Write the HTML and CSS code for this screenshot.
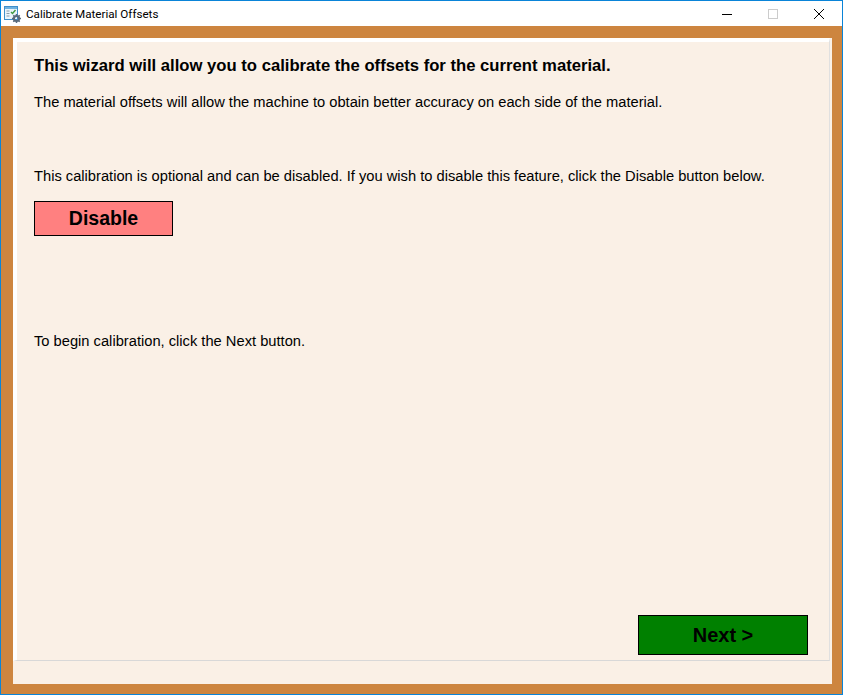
FILE: index.html
```html
<!DOCTYPE html>
<html lang="en">
<head>
    <meta charset="UTF-8">
    <title>Calibrate Material Offsets</title>
    <link rel="stylesheet" href="styles.css">
</head>
<body>
    <div class="window">
        <!-- Title bar -->
        <div class="titlebar">
            <svg class="app-icon" width="18" height="18" viewBox="0 0 18 18">
                <rect x="0.5" y="0.5" width="13" height="13" fill="#eaf4fb" stroke="#3f8fcb"/>
                <rect x="1" y="1" width="12" height="2" fill="#6fb2e0"/>
                <path d="M2.500 5h3M2.500 7.500h3M2.500 10h3" stroke="#8a9bab" stroke-width="1.200"/>
                <path d="M7 6l1.500 1.500 3-3.500" fill="none" stroke="#3f9a3f" stroke-width="1.400"/>
                <circle cx="12.500" cy="12.500" r="2.600" fill="none" stroke="#5a6b7c" stroke-width="2"/>
                <path d="M12.500 8v2M12.500 15v2M8 12.500h2M15 12.500h2M9.300 9.300l1.400 1.400M14.300 14.300l1.400 1.400M9.300 15.700l1.400-1.400M14.300 10.700l1.400-1.400" stroke="#5a6b7c" stroke-width="1.500"/>
            </svg>
            <span class="title">Calibrate Material Offsets</span>
            <div class="window-buttons">
                <svg class="win-btn" width="46" height="26" viewBox="0 0 46 26"><path d="M18 13.500h10" stroke="#000"/></svg>
                <svg class="win-btn" width="46" height="26" viewBox="0 0 46 26"><rect x="18.500" y="8.500" width="9" height="9" fill="none" stroke="#ccc"/></svg>
                <svg class="win-btn" width="46" height="26" viewBox="0 0 46 26"><path d="M18 8l10 10M28 8l-10 10" stroke="#000" fill="none"/></svg>
            </div>
        </div>

        <!-- Wizard page -->
        <div class="frame">
            <div class="sheet">
                <div class="panel">
                    <h1>This wizard will allow you to calibrate the offsets for the current material.</h1>
                    <p class="intro">The material offsets will allow the machine to obtain better accuracy on each side of the material.</p>
                    <p class="optional">This calibration is optional and can be disabled. If you wish to disable this feature, click the Disable button below.</p>
                    <button class="btn-disable">Disable</button>
                    <p class="begin">To begin calibration, click the Next button.</p>
                    <button class="btn-next">Next &gt;</button>
                </div>
            </div>
        </div>
    </div>
</body>
</html>
```

FILE: styles.css
```css
/* General layout */
html, body {
    margin: 0;
    padding: 0;
}

body {
    font-family: "Liberation Sans", Arial, sans-serif;
    color: #000;
}

.window {
    width: 843px;
    height: 695px;
    box-sizing: border-box;
    border: 1px solid #0a84d8;
    display: flex;
    flex-direction: column;
    background-color: #fff;
}

/* Title bar */
.titlebar {
    height: 25px;
    display: flex;
    align-items: center;
    flex: none;
}

.app-icon {
    margin-left: 3px;
    margin-top: 3px;
    flex: none;
}

.title {
    font-family: Roboto, sans-serif;
    font-size: 11.65px;
    margin-left: 4px;
}

.window-buttons {
    margin-left: auto;
    display: flex;
}

.win-btn {
    display: block;
}

/* Wizard frame */
.frame {
    flex: 1;
    background-color: #cd853f;
    padding: 12px 10px 10px 12px;
    display: flex;
}

.sheet {
    flex: 1;
    background-color: #faf0e6;
    display: flex;
    flex-direction: column;
}

.panel {
    height: 623px;
    box-sizing: border-box;
    border-top: 4px solid #fff;
    border-left: 4px solid #fff;
    border-right: 1px solid #e0e0e0;
    border-bottom: 1px solid #d8d8d8;
    margin-right: 2px;
    padding: 0 21px 5px 17px;
    display: flex;
    flex-direction: column;
}

h1 {
    font-size: 16.67px;
    line-height: 18px;
    font-weight: bold;
    margin: 15px 0 0;
}

p {
    font-size: 14.7px;
    line-height: 17px;
    margin: 0;
}

.intro {
    margin-top: 19px;
}

.optional {
    margin-top: 57px;
}

.begin {
    margin-top: 97px;
}

button {
    font-family: "Liberation Sans", Arial, sans-serif;
    font-weight: bold;
    color: #000;
    border: 1px solid #000;
    padding: 0;
    box-sizing: border-box;
}

.btn-disable {
    width: 139px;
    height: 35px;
    margin-top: 16px;
    font-size: 19.5px;
    background-color: #ff8080;
}

.btn-next {
    width: 170px;
    height: 40px;
    margin-top: auto;
    align-self: flex-end;
    font-size: 20px;
    background-color: #008000;
}
```
